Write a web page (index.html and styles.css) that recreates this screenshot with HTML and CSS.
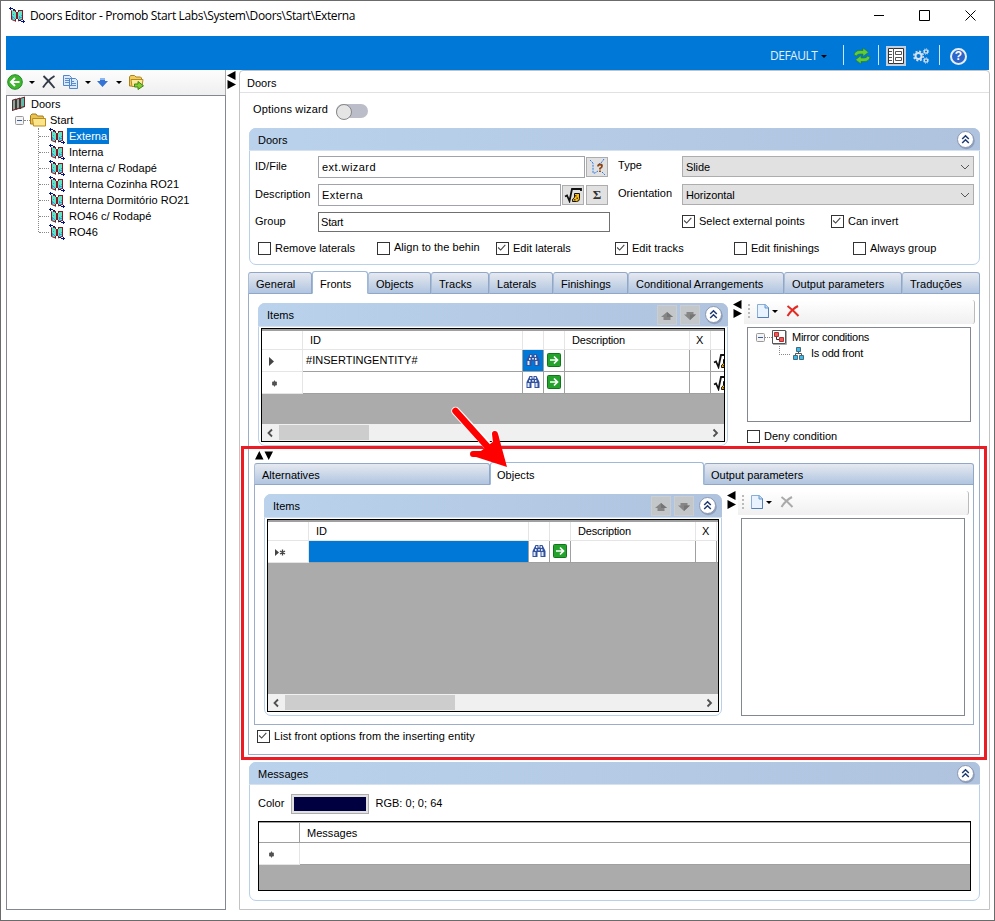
FILE: index.html
```html
<!DOCTYPE html>
<html lang="en">
<head>
<meta charset="utf-8">
<title>Doors Editor</title>
<link rel="stylesheet" href="styles.css">
</head>
<body>
<svg class="defs" width="0" height="0">
  <symbol id="door" viewBox="0 0 16 16">
    <path d="M2 3l5 1v10l-5-2zM9 4l5-1v9l-5 2z" fill="#62e3c4"/>
    <path d="M3 9h1v1h1v1H4v1H3zM5 11h1v1H5zM10 9h1v1h1v1h-1v1h-1zM12 8h1v1h-1zM4 7h1v1H4zM12 10h1v1h-1z" fill="#3a9ddc"/>
    <path d="M2.500 3.500v9M2.500 12.500l4 1.500M4 3.500h2M13.500 3v10M10 3.500h3M9 14l4-1.500" fill="none" stroke="#851923"/>
    <path d="M6 3h1v2h2V3h1v2H9v7h1v2H9v-2H7v2.500H6V12h1V5H6z" fill="#851923"/>
    <path d="M0 1.500h4M1.500 0v3M4 2.500h2M10 13.500h2M12 14.500h4M14.500 13v3" stroke="#00127c" fill="none"/>
  </symbol>
  <symbol id="doors" viewBox="0 0 16 16">
    <path d="M1 4l3-1v11l-3 1zM5 3l3-1v11l-3 1zM10 2l4-1v10l-4 2z" fill="#58bda9"/>
    <path d="M1.500 4v10.500M4.500 3v10.500M5.500 3v10.500M8.500 2v11M9.500 2v11M13.500 1v10M1 4.500l4-1.500M5 3.500L9 2M9 2.500L14 1M1 14.500l12-4" stroke="#77202a" fill="none"/>
  </symbol>
  <symbol id="folder" viewBox="0 0 16 16">
    <path d="M.5 12V3.500L2 2h4l1.500 2H13l.5 1.500V12z" fill="#e9c351" stroke="#a67a16"/>
    <path d="M2.500 6.500H15.500v7.500h-12z" fill="#fbe58b" stroke="#b98b20"/>
  </symbol>
  <symbol id="binoc" viewBox="0 0 16 16">
    <path d="M4.500 2h3v2l.5 1 .5-1V2h3l3 6v6h-5V9h-3v5h-5V8z" fill="#34539f"/>
    <path d="M5 3h1.500v2H5zM9.500 3H11v2H9.500zM4 6h1.500v2H4zM10 6h1.500v2H10zM2.500 9H4.500v4h-2zM10.500 9h2v4h-2z" fill="#dfe9fb"/><path d="M7 6h2v1.500H7z" fill="#c4d3ef"/>
  </symbol>
  <symbol id="go" viewBox="0 0 16 16">
    <rect x="1.500" y="1.500" width="13" height="13" rx="1" fill="#23a32b" stroke="#11751c"/>
    <path d="M4 8h7M8 4.500L11.500 8 8 11.500" stroke="#fff" stroke-width="1.700" fill="none"/>
  </symbol>
  <symbol id="root" viewBox="0 0 18 16">
    <path d="M1 9.500l2-1L5.500 14 8 2h9v2" fill="none" stroke="#111" stroke-width="1.800"/>
    <path d="M10.500 6.500h5v5q0 3-3 3h-4q-.5-3 2-4z" fill="#fbbc12" stroke="#111"/><path d="M11 8h1.500v1.500H11zM12.500 10.500H14V12h-1.500zM10 12h1.500v1.500H10z" fill="#624200"/>
  </symbol>
  <symbol id="page" viewBox="0 0 14 16">
    <path d="M1.500 1.500h8l3 3v10h-11z" fill="#e8f3ff" stroke="#87afd9"/><path d="M12.500 4.500v10h-11" fill="none" stroke="#527fb5"/><path d="M9 1.500v3.500h3.500" fill="#b9d7f6" stroke="#6799cb"/>
  </symbol>
  <symbol id="cross" viewBox="0 0 14 12"><path d="M1.500 1Q7 5 12.500 11M12 1Q6 4 1.500 11" fill="none" stroke="currentColor" stroke-width="2"/></symbol>
  <symbol id="up" viewBox="0 0 12 10"><path d="M6 1l6 5H9.500v3h-7V6H0z" fill="#858585"/><path d="M6 1l6 5H6z" fill="#757575"/></symbol>
  <symbol id="down" viewBox="0 0 12 10"><path d="M2.500 1h7v2.500H12L6 9 0 3.500h2.500z" fill="#858585"/><path d="M12 3.500L6 9V3.500z" fill="#757575"/></symbol>
  <symbol id="chev" viewBox="0 0 20 20">
    <circle cx="10.300" cy="10.700" r="8.500" fill="#7786a5" opacity=".6"/><circle cx="9.500" cy="9.500" r="8" fill="#fff" stroke="#8b97b1"/>
    <path d="M6.200 9L9.500 5.700 12.800 9M6.200 13l3.300-3.300 3.300 3.300" fill="none" stroke="#203a75" stroke-width="1.500"/>
  </symbol>
  <symbol id="hsplit" viewBox="0 0 9 18"><path d="M8.500 0v9L0 4.500zM.5 9v9L9 13.500z" fill="#000"/></symbol>
  <symbol id="tick" viewBox="0 0 13 13"><path d="M2.500 6.500l3 3 5.500-6" fill="none" stroke="#444" stroke-width="1.300"/></symbol>
  <symbol id="minus" viewBox="0 0 9 9"><rect x=".5" y=".5" width="8" height="8" rx="1" fill="#f4f4f4" stroke="#999"/><path d="M2 4.500h5" stroke="#3b5ba3"/></symbol>
  <symbol id="sl" viewBox="0 0 8 10"><path d="M6 1.500L2.500 5 6 8.500" fill="none" stroke="#505050" stroke-width="1.800"/></symbol>
  <symbol id="sr" viewBox="0 0 8 10"><path d="M1.500 1.500L5 5 1.500 8.500" fill="none" stroke="#505050" stroke-width="1.800"/></symbol>
  <symbol id="star" viewBox="0 0 7 7"><circle cx="3.500" cy="3.500" r="2.300" fill="#444"/><path d="M3.500 .5v6M1 2l5 3M6 2L1 5" stroke="#555"/></symbol>
</svg>

<div class="window">
  <header class="titlebar">
    <svg class="i16"><use href="#door"/></svg>
    <span class="title">Doors Editor - Promob Start Labs\System\Doors\Start\Externa</span>
    <svg class="winbtns" width="103" height="12" viewBox="0 0 103 12"><path d="M0 6.500h10M45.500 1.500h10v10h-10zM91.500 1.500l10 10M101.500 1.500l-10 10" fill="none" stroke="#000"/></svg>
  </header>

  <div class="ribbon">
    <span class="profile">DEFAULT</span><i class="caret"></i>
    <i class="bar b1"></i>
    <svg class="refresh" width="18" height="16" viewBox="0 0 18 16"><path d="M1 7q1-4.500 6-4.500h3V0l5.500 4.200L10 8.500V6H7Q4 6 4 8zM17 9q-1 4.500-6 4.500H8V16l-5.500-4.200L8 7.500V10h3q3 0 3-2z" fill="#62cc38" stroke="#237c22" stroke-width=".6"/></svg>
    <i class="bar b2"></i>
    <span class="viewbtn"><svg width="16" height="16" viewBox="0 0 16 16"><path d="M.5.5h15v15H.5z" fill="#fff" stroke="#333"/><path d="M5.500 0v16M1 3.500h3M1 6.500h3M1 9.500h3M1 12.500h3M7.500 3.500h6v3h-6zM7.500 9.500h6v3h-6z" fill="none" stroke="#555"/></svg></span>
    <svg class="gears" width="16" height="16" viewBox="0 0 16 16"><g fill="none" stroke="#d6e2ef"><circle cx="5.500" cy="8" r="3" stroke-width="2"/><circle cx="5.500" cy="8" r="4.700" stroke-dasharray="2 1.700" stroke-width="1.500"/><circle cx="13" cy="3.500" r="1.700" stroke-width="1.300"/><circle cx="13" cy="3.500" r="2.700" stroke-dasharray="1 1.100"/><circle cx="13" cy="12.500" r="1.700" stroke-width="1.300"/><circle cx="13" cy="12.500" r="2.700" stroke-dasharray="1 1.100"/></g></svg>
    <i class="bar b3"></i>
    <span class="help">?</span>
  </div>

  <main class="work">
    <aside class="side">
      <div class="toolbar">
        <svg width="16" height="16" viewBox="0 0 16 16"><circle cx="8" cy="8" r="7.300" fill="#3fb62d" stroke="#22892a"/><path d="M12.500 8H4.500M8 4L4 8l4 4" fill="none" stroke="#fff" stroke-width="2"/></svg>
        <i class="caret c1"></i>
        <svg class="del" width="14" height="14" viewBox="0 0 14 14"><path d="M1.500 1Q7 6 12.500 13M12.500 1Q6 5 1 12.500" fill="none" stroke="#333b48" stroke-width="1.900"/></svg>
        <svg class="copy" width="16" height="14" viewBox="0 0 16 14"><path d="M.5.5h6l2 2v8h-8zM6.500 3.500h6l2 2v8h-8z" fill="#dceaff" stroke="#5586c6"/><path d="M2 3.500h4M2 5.500h4M2 7.500h4M8 6.500h3M8 8.500h5M8 10.500h5" stroke="#5b8ccc"/></svg>
        <i class="caret c2"></i>
        <svg class="dn" width="11" height="9" viewBox="0 0 11 9"><path d="M3 0h5v3h3L5.500 9 0 3h3z" fill="#3573d5"/><path d="M3 0h5v2H3z" fill="#8db5ee"/></svg>
        <i class="caret c3"></i>
        <svg class="mv" width="16" height="15" viewBox="0 0 16 15"><path d="M1.500 11V2l1-1.500h4L8 2h4.500l1 1v8z" fill="#f2ce60" stroke="#ad8419"/><path d="M3 4.500h12l-1 7H4z" fill="#fce99a" stroke="#b58b20"/><path d="M6.500 9H10V6.500l5.500 4.300L10 14.500V12H6.500z" fill="#7ed02e" stroke="#467f18"/></svg>
      </div>
      <div class="tree">
        <div class="row root"><svg class="i16"><use href="#doors"/></svg><span>Doors</span></div>
        <div class="row start"><svg class="i9"><use href="#minus"/></svg><i class="dots"></i><svg class="i16"><use href="#folder"/></svg><span>Start</span></div>
        <div class="kids">
          <div class="row leaf"><i class="dots"></i><svg class="i16"><use href="#door"/></svg><span class="sel">Externa</span></div>
          <div class="row leaf"><i class="dots"></i><svg class="i16"><use href="#door"/></svg><span>Interna</span></div>
          <div class="row leaf"><i class="dots"></i><svg class="i16"><use href="#door"/></svg><span>Interna c/ Rodapé</span></div>
          <div class="row leaf"><i class="dots"></i><svg class="i16"><use href="#door"/></svg><span>Interna Cozinha RO21</span></div>
          <div class="row leaf"><i class="dots"></i><svg class="i16"><use href="#door"/></svg><span>Interna Dormitório RO21</span></div>
          <div class="row leaf"><i class="dots"></i><svg class="i16"><use href="#door"/></svg><span>RO46 c/ Rodapé</span></div>
          <div class="row leaf"><i class="dots"></i><svg class="i16"><use href="#door"/></svg><span>RO46</span></div>
        </div>
      </div>
    </aside>
    <div class="split"><svg class="hs"><use href="#hsplit"/></svg></div>

    <section class="panel">
      <div class="panel-head">Doors</div>
      <div class="wizard"><span>Options wizard</span><i class="toggle"></i></div>

      <section class="group doors-group">
        <div class="group-head"><span>Doors</span><svg class="chev"><use href="#chev"/></svg></div>
        <div class="form">
          <label class="l">ID/File</label>
          <div class="ctl"><div class="input">ext.wizard</div><div class="btn"><svg width="18" height="18" viewBox="0 0 18 18"><path d="M2 2l3 3v10h2l3-2M16 1l-2 3-3 2M14 14l3 3" fill="none" stroke="#2878e8" stroke-dasharray="2 1"/><path d="M10 8.500q0-2 2-2t2 1.500-2 2.500v1M12 12.500v1.500" fill="none" stroke="#8b4513" stroke-width="1.800"/></svg></div></div>
          <label class="r">Type</label>
          <div class="select"><span>Slide</span><svg width="10" height="6" viewBox="0 0 10 6"><path d="M1 1l4 4 4-4" fill="none" stroke="#555"/></svg></div>
          <label class="l">Description</label>
          <div class="ctl"><div class="input">Externa</div><div class="btn"><svg width="18" height="16"><use href="#root"/></svg></div><div class="btn sigma">Σ</div></div>
          <label class="r">Orientation</label>
          <div class="select"><span>Horizontal</span><svg width="10" height="6" viewBox="0 0 10 6"><path d="M1 1l4 4 4-4" fill="none" stroke="#555"/></svg></div>
          <label class="l grp">Group</label>
          <div class="ctl"><div class="input flat">Start</div></div>
          <span></span>
          <div class="pair"><div class="check"><svg class="box"><use href="#tick"/></svg>Select external points</div><div class="check"><svg class="box"><use href="#tick"/></svg>Can invert</div></div>
        </div>
        <div class="checks">
          <div class="check"><svg class="box"></svg>Remove laterals</div>
          <div class="check lift"><svg class="box"></svg><span>Align to the behin</span></div>
          <div class="check"><svg class="box"><use href="#tick"/></svg>Edit laterals</div>
          <div class="check"><svg class="box"><use href="#tick"/></svg>Edit tracks</div>
          <div class="check"><svg class="box"></svg>Edit finishings</div>
          <div class="check"><svg class="box"></svg>Always group</div>
        </div>
      </section>

      <nav class="tabs main-tabs">
        <div class="tab">General</div><div class="tab active">Fronts</div><div class="tab">Objects</div><div class="tab">Tracks</div><div class="tab">Laterals</div><div class="tab">Finishings</div><div class="tab">Conditional Arrangements</div><div class="tab">Output parameters</div><div class="tab">Traduções</div>
      </nav>
      <div class="page">
        <div class="columns top">
          <section class="group items">
            <div class="group-head"><span>Items</span><i class="mini"><svg><use href="#up"/></svg></i><i class="mini"><svg><use href="#down"/></svg></i><svg class="chev"><use href="#chev"/></svg></div>
            <div class="datagrid">
              <div class="gr gh"><b></b><b class="id">ID</b><b></b><b></b><b class="desc">Description</b><b>X</b><b></b></div>
              <div class="gr"><b class="rh"><svg width="6" height="10" viewBox="0 0 6 10"><path d="M0 1l5 4.500L0 10z" fill="#444"/></svg></b><b>#INSERTINGENTITY#</b><b class="ic hot"><svg class="i16"><use href="#binoc"/></svg></b><b class="ic"><svg class="i16"><use href="#go"/></svg></b><b></b><b></b><b class="ic cut"><svg width="18" height="16"><use href="#root"/></svg></b></div>
              <div class="gr"><b class="rh s"><svg width="7" height="7"><use href="#star"/></svg></b><b></b><b class="ic"><svg class="i16"><use href="#binoc"/></svg></b><b class="ic"><svg class="i16"><use href="#go"/></svg></b><b></b><b></b><b class="ic cut"><svg width="18" height="16"><use href="#root"/></svg></b></div>
              <div class="fill"></div>
              <div class="scroll"><svg width="8" height="10"><use href="#sl"/></svg><i class="thumb short"></i><svg class="end" width="8" height="10"><use href="#sr"/></svg></div>
            </div>
          </section>
          <div class="vsplit"><svg class="hs"><use href="#hsplit"/></svg></div>
          <div class="conds">
            <div class="toolbar ct"><i class="grip"></i><svg class="pg"><use href="#page"/></svg><i class="caret"></i><svg class="x red"><use href="#cross"/></svg></div>
            <div class="condbox">
              <div class="row c0"><svg class="i9"><use href="#minus"/></svg><i class="dots"></i><svg width="15" height="15" viewBox="0 0 15 15"><path d="M.5.5h13v13H.5z" fill="#fff" stroke="#555"/><path d="M14.500 1v13.500H1" stroke="#aaa" fill="none"/><path d="M2.500 2.500h4v4h-4zM7.500 7.500h4v4h-4z" fill="#f45858" stroke="#a33"/><path d="M4.500 7v2.500H7" fill="none" stroke="#333"/></svg><span>Mirror conditions</span></div>
              <div class="row c1r"><i class="elbow"></i><svg width="11" height="13" viewBox="0 0 11 13"><path d="M5.500 4v3M2.500 9V6.500h6V9" fill="none" stroke="#555"/><path d="M3.500.5h4v4h-4zM.5 8.500h4v4h-4zM6.500 8.500h4v4h-4z" fill="#35bdf0" stroke="#4a6878"/></svg><span>Is odd front</span></div>
            </div>
            <div class="check deny"><svg class="box"></svg>Deny condition</div>
          </div>
        </div>
        <div class="updown"><svg width="18" height="9" viewBox="0 0 18 9"><path d="M0 8.500h8.500L4.300 0zM9.500.5H18L13.700 9z"/></svg></div>
        <nav class="tabs sub-tabs"><div class="tab">Alternatives</div><div class="tab active">Objects</div><div class="tab">Output parameters</div></nav>
        <div class="page inner">
          <div class="columns low">
            <section class="group items">
              <div class="group-head"><span>Items</span><i class="mini"><svg><use href="#up"/></svg></i><i class="mini"><svg><use href="#down"/></svg></i><svg class="chev"><use href="#chev"/></svg></div>
              <div class="datagrid">
                <div class="gr gh"><b></b><b class="id">ID</b><b></b><b></b><b class="desc">Description</b><b>X</b><b></b></div>
                <div class="gr"><b class="rh"><svg class="newrow" width="11" height="7" viewBox="0 0 11 7"><path d="M0 0l4 3.500L0 7z" fill="#444"/><path d="M7.500 .5v6M5 2l5 3M10 2L5 5" stroke="#444" stroke-width="1.300"/></svg></b><b class="hot"></b><b class="ic"><svg class="i16"><use href="#binoc"/></svg></b><b class="ic"><svg class="i16"><use href="#go"/></svg></b><b></b><b></b><b></b></div>
                <div class="fill"></div>
                <div class="scroll"><svg width="8" height="10"><use href="#sl"/></svg><i class="thumb long"></i><svg class="end" width="8" height="10"><use href="#sr"/></svg></div>
              </div>
            </section>
            <div class="vsplit"><svg class="hs"><use href="#hsplit"/></svg></div>
            <div class="conds">
              <div class="toolbar ct"><i class="grip"></i><svg class="pg"><use href="#page"/></svg><i class="caret"></i><svg class="x gray"><use href="#cross"/></svg></div>
              <div class="condbox"></div>
            </div>
          </div>
        </div>
        <div class="check list"><svg class="box"><use href="#tick"/></svg>List front options from the inserting entity</div>
      </div>

      <section class="group messages">
        <div class="group-head"><span>Messages</span><svg class="chev"><use href="#chev"/></svg></div>
        <div class="color"><span>Color</span><i class="swatch"></i><span class="rgb">RGB: 0; 0; 64</span></div>
        <div class="datagrid msg">
          <div class="gr gh"><b></b><b>Messages</b></div>
          <div class="gr"><b class="rh s"><svg width="7" height="7"><use href="#star"/></svg></b><b></b></div>
          <div class="fill"></div>
        </div>
      </section>
    </section>
  </main>
</div>
<div class="highlight"></div>
<svg class="arrow" width="64" height="68" viewBox="0 0 64 68"><g fill="none" stroke-linecap="round" stroke-linejoin="round"><path d="M10.500 10L45 47" stroke="#fff" stroke-width="8.500"/><path d="M50 33L52 50M28 53h20" stroke="#fff" stroke-width="8"/><path d="M10.500 10L50 54" stroke="#f00" stroke-width="6.500"/><path d="M50 33L52 50M28 53h18" stroke="#f00" stroke-width="6"/></g><path d="M49 40l4-7 9 33-34-11 4-2z" fill="#f00"/></svg>
</body>
</html>
```
FILE: styles.css
```css
* { box-sizing: border-box; }
body { margin: 0; background: #fff; font: 11px/16px "Liberation Sans", Arial, sans-serif; letter-spacing: .03px; color: #000; position: relative; overflow: hidden; }
svg { display: block; flex: none; overflow: visible; }
i, b { font-style: normal; font-weight: normal; display: block; flex: none; }
.defs { position: absolute; }
.i16 { width: 16px; height: 16px; }
.i9 { width: 9px; height: 9px; }
.hs { width: 9px; height: 18px; }
.caret { border: 3px solid transparent; border-top-color: #000; border-bottom: 0; width: 6px; height: 3px; }

.window { width: 995px; height: 921px; border: 1px solid #6b6b6b; background: #fff; display: flex; flex-direction: column; }
.titlebar { height: 35px; display: flex; padding: 6px 17px 0 8px; }
.title { font: 12px/18px "Open Sans", "Noto Sans", sans-serif; margin-left: 5px; letter-spacing: -.35px; white-space: nowrap; }
.winbtns { margin-left: auto; margin-top: 2px; }
.ribbon { height: 34px; margin: 0 5px; background: #0078d7; display: flex; align-items: center; color: #e4effa; padding: 6px 21px 0 764px; }
.profile { font: 12px/18px "Open Sans", "Noto Sans", sans-serif; width: 47px; letter-spacing: -.5px; }
.ribbon .caret { margin-left: 4px; }
.bar { width: 1px; height: 20px; background: #cce4f7; margin-top: -2px; }
.b1 { margin-left: 16px; } .refresh { margin-left: 9px; } .b2 { margin-left: 7px; }
.viewbtn { width: 20px; height: 20px; background: #c2cfdf; padding: 2px; margin-left: 7px; }
.gears { margin-left: 7px; } .b3 { margin-left: 10px; }
.help { width: 17px; height: 17px; border-radius: 50%; border: 2px solid #e8eef8; background: #2c66cb; font: bold 12px/13px "Liberation Sans", sans-serif; text-align: center; color: #fff; margin: 1px 0 0 10px; }

.work { display: flex; height: 840px; padding-left: 5px; }
.side { width: 220px; display: flex; flex-direction: column; }
.toolbar { height: 25px; display: flex; align-items: center; background: linear-gradient(#fdfdfd, #efefef); border-right: 1px solid #aaa; padding: 0 0 1px 1px; }
.toolbar .c1 { margin-left: 6px; } .del { margin-left: 7px; } .copy { margin-left: 7px; } .toolbar .c2 { margin-left: 6px; } .dn { margin-left: 6px; } .toolbar .c3 { margin-left: 8px; } .mv { margin-left: 6px; }
.tree { flex: 1; border: 1px solid #828790; padding: 0 0 0 5px; }
.row { display: flex; height: 16px; align-items: center; white-space: nowrap; }
.row span { line-height: 15px; }
.root svg { margin-left: -1px; }
.root span { margin-left: 4px; }
.start { padding-left: 3px; }
.dots { border-top: 1px dotted #888; }
.start .dots { width: 6px; } .start .i16 { margin-right: 4px; }
.kids { border-left: 1px dotted #888; margin-left: 26px; height: 104px; }
.leaf .dots { width: 10px; } .leaf .i16 { margin-right: 3px; }
.leaf span { padding: 0 2px; margin-left: -1px; }
.leaf .sel { background: #0078d7; color: #fff; line-height: 16px; }
.split { width: 13px; padding: 1px 0 0 1px; }

.panel { width: 751px; border: 1px solid #c3c3c3; border-radius: 4px 4px 0 0; padding-left: 8px; }
.panel-head { height: 22px; border-bottom: 1px solid #e1e1e1; margin-left: -8px; padding: 4px 7px 0; }
.wizard { height: 35px; display: flex; padding: 8px 0 0 5px; }
.wizard span { width: 83px; letter-spacing: .17px; }
.toggle { width: 32px; height: 14px; background: #bbbdc8; border-radius: 7px; margin-top: 3px; }
.toggle::before { content: ""; display: block; width: 14px; height: 14px; border: 1px solid #888; border-radius: 50%; background: #e5e5e5; }
.group { border: 1px solid #b9d0e9; border-radius: 7px; background: #fff; }
.group-head { height: 23px; margin: -1px -1px 0; border-radius: 7px 7px 0 0; background: linear-gradient(90deg, #bad2ec, #afc3df); border-bottom: 1px solid #d4e1f0; display: flex; align-items: center; padding: 1px 4px 0 9px; }
.group-head span { flex: 1; }
.chev { width: 20px; height: 20px; }
.doors-group, .messages { width: 731px; margin-left: 1px; }
.doors-group { height: 137px; }
.form { display: grid; grid-template-columns: 68px 292px 72px 292px; grid-auto-rows: 28px; padding-top: 5px; }
.form .l { padding: 2px 0 0 5px; } .form .r { padding: 1px 0 0 8px; } .form .grp { padding-top: 1px; }
.ctl { display: flex; gap: 1px; padding-right: 2px; }
.input { flex: 1; height: 22px; border: 1px solid #a0a3aa; padding: 2px 3px; letter-spacing: .45px; }
.flat { height: 20px; border-color: #707070; padding: 1px 2px; margin: 0 -2px 0 0; letter-spacing: -.2px; }
.btn { width: 22px; height: 20px; margin-top: 1px; border: 1px solid #adadad; background: #e1e1e1; display: grid; place-items: center; }
.btn + .btn { margin-left: 1px; }
.sigma { font: bold 13px/18px "Liberation Serif", serif; color: #333; }
.select { height: 21px; border: 1px solid #adadad; background: #e1e1e1; display: flex; justify-content: space-between; align-items: center; padding: 1px 3px 0; letter-spacing: -.1px; }
.pair { display: grid; grid-template-columns: 149px 1fr; padding-top: 1px; align-items: start; }
.check { display: flex; align-items: center; gap: 4px; height: 16px; white-space: nowrap; }
.box { width: 13px; height: 13px; border: 1px solid #333; background: #fff; }
.box use { transform: translate(-1px, -1px); width: 13px; height: 13px; }
.checks { display: grid; grid-template-columns: repeat(6, 119px); padding: 0 0 0 8px; }
.lift span { margin-top: -2px; }

.tabs { display: flex; height: 21px; position: relative; }
.tab { height: 22px; border: 1px solid #91a7c8; border-left-color: #a9bdd6; border-radius: 3px 3px 0 0; background: linear-gradient(#e6e9f0, #b0c5e0); padding: 3px 0 0 7px; white-space: nowrap; }
.tab.active { background: #fff; margin-top: -1px; height: 23px; padding-top: 4px; border-color: #9db8d8; border-bottom-color: #fff; }
.main-tabs { margin-top: 7px; width: 732px; }
.main-tabs .tab:nth-child(1) { width: 64px; } .main-tabs .tab:nth-child(2) { width: 56px; } .main-tabs .tab:nth-child(3) { width: 63px; } .main-tabs .tab:nth-child(4) { width: 58px; } .main-tabs .tab:nth-child(5) { width: 64px; } .main-tabs .tab:nth-child(6) { width: 75px; } .main-tabs .tab:nth-child(7) { width: 156px; } .main-tabs .tab:nth-child(8) { width: 118px; } .main-tabs .tab:nth-child(9) { width: 78px; }
.page { width: 732px; height: 462px; border: 1px solid #9badc9; }
.columns { display: flex; }
.top { padding: 9px 0 0 9px; height: 152px; }
.top .items { width: 470px; height: 143px; }
.items .group-head { gap: 3px; height: 24px; }
.items .chev { margin-left: 1px; }
.mini { width: 20px; height: 20px; background: #c4c7ca; border: 1px solid #cacdd2; padding: 5px 3px; }
.mini svg { width: 12px; height: 10px; }
.datagrid { margin: 1px 2px 0; border: 1px solid #000; background: #ababab; display: flex; flex-direction: column; }
.top .datagrid { height: 114px; width: 464px; }
.gr { height: 22px; display: grid; grid-template-columns: 41px 220px 21px 21px 125px 21px 1fr; background: #fff; overflow: hidden; flex: none; }
.gr b { border-right: 1px solid #a0a0a0; border-bottom: 1px solid #a0a0a0; padding: 2px 3px; white-space: nowrap; overflow: hidden; min-width: 0; }
.gr b:last-child { border-right: 0; }
.gh { border-top: 2px solid #a0a0a0; height: 21px; }
.gh b { border-color: #e5e5e5; padding: 1px 7px; }
.gh .desc { letter-spacing: -.2px; }
.gh b:nth-child(6) { padding: 1px 6px; }
.gr .rh { border-color: #e5e5e5; padding: 6px 0 0 7px; }
.gr .rh.s { padding-left: 9px; padding-top: 8px; }
.newrow { margin-top: 2px; }
.gr .ic { padding: 2px; } .gr .hot { background: #0078d7; } .gr .cut { padding: 3px 0 0 2px; }
.fill { flex: 1; }
.scroll { height: 17px; background: #f0f0f0; display: flex; align-items: center; padding: 0 4px; }
.thumb { height: 15px; background: #cdcdcd; margin-left: 5px; } .short { width: 90px; } .long { width: 170px; }
.end { margin-left: auto; }
.vsplit { width: 16px; padding-left: 5px; margin-top: -3px; }
.conds { width: 231px; margin-top: -3px; }
.ct { height: 24px; background: linear-gradient(#fff, #f0f0f0); border-right-color: #bbb; border-radius: 0 3px 3px 0; padding: 0 0 2px 4px; }
.grip { width: 2px; height: 15px; background: repeating-linear-gradient(#bbb 0 2px, transparent 2px 4px); }
.pg { width: 14px; height: 16px; margin-left: 6px; } .toolbar.ct .caret { margin-left: 2px; }
.x { width: 14px; height: 12px; margin-left: 8px; } .red { color: #e22922; } .gray { color: #aaa; }
.condbox { margin: 3px 0 0 3px; width: 224px; border: 1px solid #828790; background: #fff; }
.top .condbox { height: 95px; padding: 1px 0 0 8px; letter-spacing: -.25px; }
.c0 .dots { width: 7px; } .c0 span { margin-left: 5px; }
.c1r { padding-left: 23px; } .c1r span { margin-left: 7px; }
.elbow { width: 11px; height: 9px; border: 1px dotted #888; border-width: 0 0 1px 1px; margin: -6px 3px 0 0; }
.deny { margin: 6px 0 0 3px; }
.updown { height: 17px; padding: 5px 0 0 6px; }
.sub-tabs { margin-left: 5px; width: 720px; }
.sub-tabs .tab { padding-left: 7px; } .sub-tabs .tab:nth-child(n+2) { padding-left: 6px; }
.sub-tabs .tab:nth-child(1) { width: 236px; } .sub-tabs .tab:nth-child(2) { width: 214px; } .sub-tabs .tab:nth-child(3) { width: 270px; }
.inner { margin-left: 5px; width: 720px; height: 241px; }
.low { padding: 9px 0 0 9px; }
.low .items { width: 458px; height: 222px; }
.low .datagrid { width: 452px; height: 193px; }
.low .condbox { height: 198px; }
.list { margin: 3px 0 0 8px; letter-spacing: .06px; }
.messages { margin-top: 7px; height: 139px; }
.color { display: flex; padding: 9px 0 0 8px; height: 35px; }
.swatch { width: 78px; height: 20px; border: 1px solid #adadad; background: #000040; box-shadow: inset 0 0 0 2px #e1e1e1; margin: 0 6px 0 7px; }
.color span { line-height: 19px; height: 19px; }
.msg { width: 713px; height: 70px; margin-left: 8px; }
.msg .gr { grid-template-columns: 41px 1fr; }
.msg .gh { border-top-width: 1px; } .msg .gh b { border-color: #a0a0a0; padding-top: 2px; }

.highlight { position: absolute; left: 241px; top: 446px; width: 746px; height: 314px; border: 3px solid #ed1c24; }
.arrow { position: absolute; left: 445px; top: 401px; }
```
